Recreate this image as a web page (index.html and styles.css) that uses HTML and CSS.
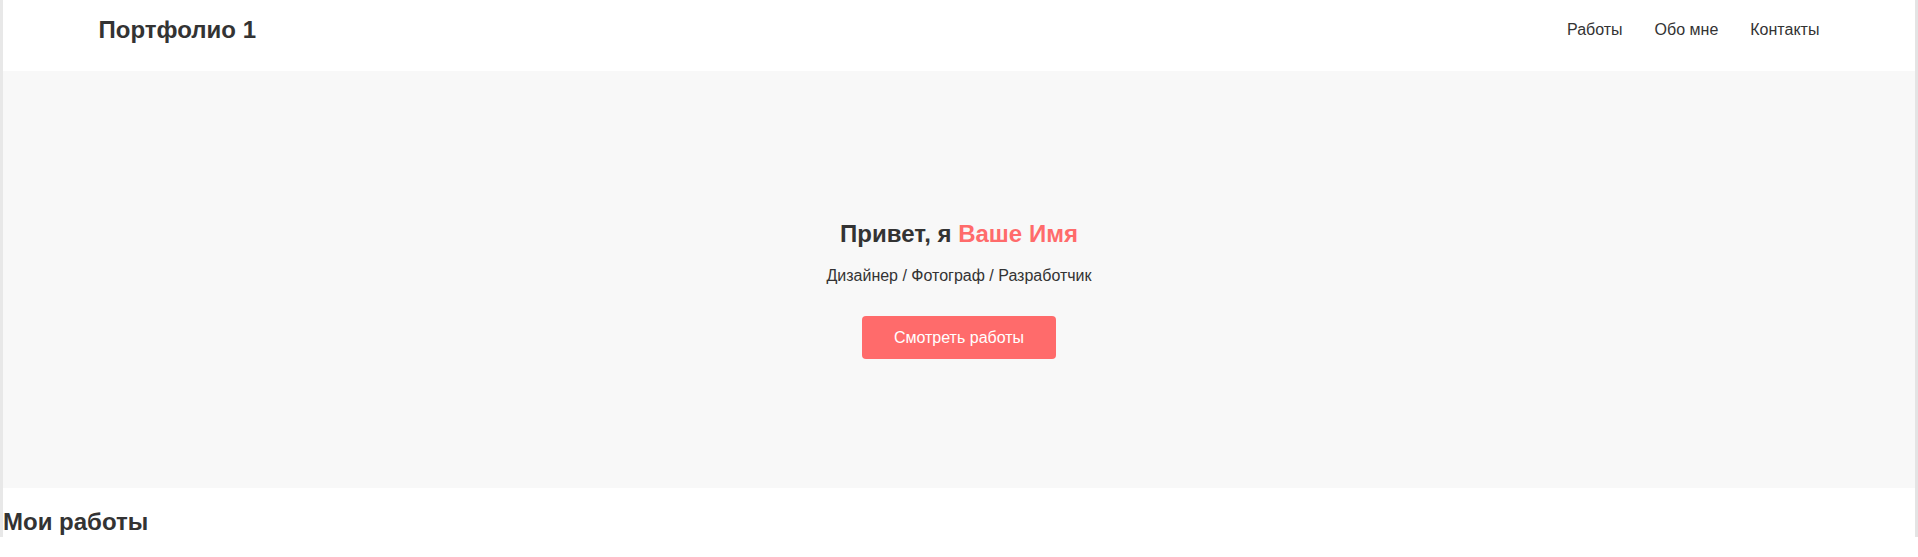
FILE: index.html
```html
<!DOCTYPE html>
<html lang="ru">
<head>
<meta charset="utf-8">
<title>Портфолио 1</title>
<link rel="stylesheet" href="styles.css">
</head>
<body>
<div class="frame">
  <header class="site-header">
    <div class="logo">Портфолио 1</div>
    <nav class="nav">
      <a href="#works">Работы</a>
      <a href="#about">Обо мне</a>
      <a href="#contacts">Контакты</a>
    </nav>
  </header>
  <section class="hero">
    <h1 class="hero-title">Привет, я <span class="accent">Ваше Имя</span></h1>
    <p class="hero-sub">Дизайнер / Фотограф / Разработчик</p>
    <a class="btn" href="#works">Смотреть работы</a>
  </section>
  <section class="works" id="works">
    <h2 class="works-title">Мои работы</h2>
  </section>
</div>
</body>
</html>
```

FILE: styles.css
```css
html, body {
  margin: 0;
  padding: 0;
  background: #fff;
}
body {
  font-family: "Liberation Sans", Arial, sans-serif;
  color: #333;
}
.frame {
  height: 537px;
  overflow: hidden;
  border-left: 3px solid #e8e8e8;
  border-right: 3px solid #e4e4e4;
  background: #fff;
}
.site-header {
  height: 60px;
  margin-bottom: 11px;
  padding: 0 5%;
  display: flex;
  align-items: center;
  justify-content: space-between;
}
.logo {
  font-size: 24px;
  font-weight: bold;
  color: #333;
}
.nav {
  display: flex;
  gap: 32px;
}
.nav a {
  font-size: 16px;
  color: #333;
  text-decoration: none;
}
.hero {
  height: 417px;
  box-sizing: border-box;
  padding-top: 149px;
  background: #f8f8f8;
  display: flex;
  flex-direction: column;
  align-items: center;
  text-align: center;
}
.hero-title {
  margin: 0 0 19px;
  font-size: 24px;
  font-weight: bold;
  color: #333;
}
.accent {
  color: #ff6b6b;
}
.hero-sub {
  margin: 0 0 31px;
  font-size: 16px;
  color: #333;
}
.btn {
  display: inline-block;
  padding: 12px 32px;
  line-height: 19px;
  font-size: 16px;
  color: #fff;
  background: #ff6b6b;
  border-radius: 4px;
  text-decoration: none;
}
.works-title {
  margin: 20px 0 0;
  font-size: 24px;
  font-weight: bold;
  color: #333;
}
```
